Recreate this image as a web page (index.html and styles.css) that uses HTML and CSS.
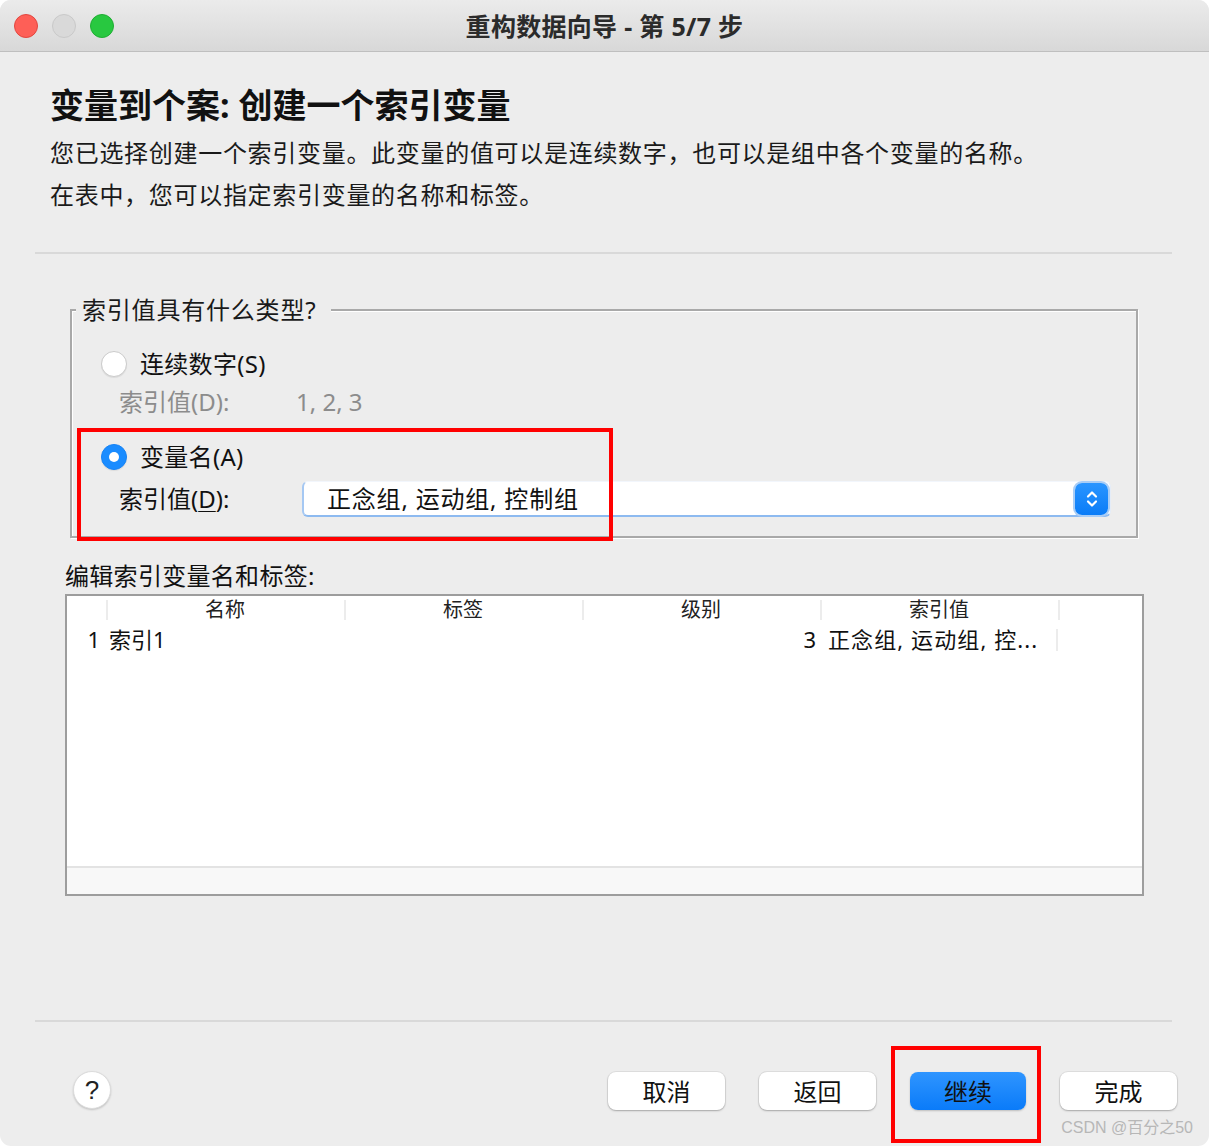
FILE: index.html
```html
<!DOCTYPE html>
<html lang="zh-CN">
<head>
<meta charset="utf-8">
<title>重构数据向导 - 第 5/7 步</title>
<link rel="stylesheet" href="styles.css">
</head>
<body>
<div class="window">
  <div class="titlebar">
    <div class="lights">
      <span class="light red"></span>
      <span class="light gray"></span>
      <span class="light green"></span>
    </div>
    <div class="title">重构数据向导 - 第 5/7 步</div>
  </div>

  <div class="content">
    <h1 class="heading">变量到个案: 创建一个索引变量</h1>
    <p class="desc">您已选择创建一个索引变量。此变量的值可以是连续数字，也可以是组中各个变量的名称。<br>在表中，您可以指定索引变量的名称和标签。</p>

    <div class="sep sep-top"></div>

    <div class="group">
      <span class="legend">索引值具有什么类型?</span>
      <div class="radio-row">
        <span class="radio"></span>
        <span class="radio-label">连续数字(S)</span>
      </div>
      <div class="value-row dim">
        <span class="value-label w1">索引值(D):</span>
        <span>1, 2, 3</span>
      </div>
      <div class="radio-row row-var">
        <span class="radio checked"></span>
        <span class="radio-label">变量名(A)</span>
      </div>
      <div class="value-row">
        <span class="value-label w2">索引值(<u>D</u>):</span>
        <div class="combo">
          <span class="combo-text">正念组, 运动组, 控制组</span>
          <span class="stepper">
            <svg width="14" height="20" viewBox="0 0 14 20"><path d="M3 7.5 L7 3.5 L11 7.5" fill="none" stroke="#fff" stroke-width="2.2" stroke-linecap="round" stroke-linejoin="round"/><path d="M3 12.5 L7 16.5 L11 12.5" fill="none" stroke="#fff" stroke-width="2.2" stroke-linecap="round" stroke-linejoin="round"/></svg>
          </span>
        </div>
      </div>
      <div class="highlight hl-group"></div>
    </div>

    <div class="table-label">编辑索引变量名和标签:</div>
    <div class="table">
      <div class="thead">
        <div class="cell c0"></div>
        <div class="cell col">名称</div>
        <div class="cell col">标签</div>
        <div class="cell col">级别</div>
        <div class="cell col">索引值</div>
        <div class="cell rest"></div>
      </div>
      <div class="trow">
        <div class="cell c0 num">1</div>
        <div class="cell col left">索引1</div>
        <div class="cell col"></div>
        <div class="cell col right">3</div>
        <div class="cell col left sepd">正念组, 运动组, 控...</div>
        <div class="cell rest"></div>
      </div>
      <div class="tfill"></div>
      <div class="hscroll"></div>
    </div>

    <div class="sep sep-bottom"></div>

    <div class="footer">
      <button class="help">?</button>
      <div class="buttons">
        <button class="btn">取消</button>
        <button class="btn">返回</button>
        <button class="btn primary">继续</button>
        <button class="btn">完成</button>
      </div>
      <div class="highlight hl-btn"></div>
      <div class="watermark">CSDN @百分之50</div>
    </div>
  </div>
</div>
</body>
</html>
```

FILE: styles.css
```css
* { box-sizing: border-box; }
html, body { margin: 0; padding: 0; background: #ffffff; }
body {
  width: 1209px;
  height: 1146px;
  overflow: hidden;
  font-family: "Noto Sans", "Noto Sans CJK SC", sans-serif;
  color: #111;
}
.window {
  width: 1209px;
  height: 1146px;
  background: #ededed;
  border-radius: 11px;
  overflow: hidden;
  display: flex;
  flex-direction: column;
}
.titlebar {
  height: 52px;
  flex: none;
  background: linear-gradient(#ebebeb, #d8d8d8);
  border-bottom: 1px solid #bfbfbf;
  position: relative;
  display: flex;
  align-items: center;
  justify-content: center;
}
.lights {
  position: absolute;
  left: 14px;
  top: 14px;
  display: flex;
  gap: 14px;
}
.light {
  width: 24px;
  height: 24px;
  border-radius: 50%;
  display: block;
}
.light.red { background: #fe5f57; border: 1px solid #e2463f; }
.light.gray { background: #d9d9d9; border: 1px solid #c9c9c9; }
.light.green { background: #28c840; border: 1px solid #1fae33; }
.title {
  font-size: 25px;
  font-weight: 700;
  color: #2b2b2b;
  line-height: 30px;
  letter-spacing: 0.3px;
}
.content {
  flex: 1;
  display: flex;
  flex-direction: column;
}
.heading {
  margin: 33px 0 0 50px;
  font-size: 34px;
  line-height: 40px;
  font-weight: 700;
  color: #111;
}
.desc {
  margin: 7px 0 0 50px;
  font-size: 24px;
  line-height: 42px;
  letter-spacing: 0.7px;
  color: #1a1a1a;
}
.sep {
  height: 2px;
  background: #d9d9d9;
  margin-left: 35px;
  margin-right: 37px;
}
.sep-top { margin-top: 36px; }
.group {
  position: relative;
  margin: 55px 71px 0 70px;
  height: 229px;
  border: 2px solid #a9a9a9;
  box-shadow: inset 1px 1px 0 #ffffff, 1px 1px 0 #ffffff;
  padding: 38px 25px 0 29px;
  display: flex;
  flex-direction: column;
}
.legend {
  position: absolute;
  left: 4px;
  top: -16px;
  padding: 0 15px 0 6px;
  background: #ededed;
  font-size: 24px;
  line-height: 30px;
  letter-spacing: 0.8px;
  color: #1a1a1a;
}
.radio-row {
  height: 30px;
  display: flex;
  align-items: center;
}
.row-var { margin-top: 25px; }
.radio {
  width: 26px;
  height: 26px;
  border-radius: 50%;
  background: #fff;
  border: 1px solid #cbcbcb;
  box-shadow: 0 1px 1px rgba(0,0,0,0.08);
  margin-right: 13px;
  flex: none;
  position: relative;
}
.radio.checked {
  background: #1a8cff;
  border-color: #1683f5;
}
.radio.checked::after {
  content: "";
  position: absolute;
  left: 7px;
  top: 7px;
  width: 10px;
  height: 10px;
  border-radius: 50%;
  background: #fff;
}
.radio-label {
  font-size: 24px;
  line-height: 30px;
  letter-spacing: 0.3px;
  color: #111;
}
.value-row {
  margin-top: 8px;
  padding-left: 18px;
  display: flex;
  align-items: center;
  font-size: 24px;
  line-height: 30px;
  color: #111;
}
.value-row.dim { color: #8c8c8c; }
.value-label { flex: none; }
.value-label.w1 { width: 177px; }
.value-label.w2 { width: 183px; }
.value-label u { text-decoration-thickness: 1px; text-underline-offset: 3px; }
.combo {
  flex: 1;
  height: 36px;
  background: #fff;
  border-radius: 6px;
  border-left: 2px solid #a5c8f3;
  border-bottom: 2px solid #8dbaf0;
  border-top: 1px solid #f2f6fc;
  border-right: 1px solid #e4ecf7;
  display: flex;
  align-items: center;
  padding-left: 23px;
  padding-right: 2px;
  margin-top: 1px;
}
.combo-text {
  flex: 1;
  font-size: 24px;
  line-height: 30px;
  letter-spacing: 0.8px;
  color: #111;
}
.stepper {
  width: 33px;
  height: 32px;
  border-radius: 7px;
  background: linear-gradient(#2a95ff, #0a7cf7);
  box-shadow: 0 0 0 2px #a9cdf6;
  display: flex;
  align-items: center;
  justify-content: center;
}
.highlight {
  position: absolute;
  border: 4px solid #ff0000;
  pointer-events: none;
}
.hl-group {
  left: 5px;
  top: 117px;
  width: 536px;
  height: 113px;
}
.table-label {
  margin: 23px 0 0 65px;
  font-size: 24px;
  line-height: 30px;
  letter-spacing: 0.3px;
  color: #111;
}
.table {
  margin: 3px 65px 0 65px;
  height: 302px;
  background: #fff;
  border: 2px solid #9d9d9d;
  display: flex;
  flex-direction: column;
}
.thead, .trow {
  display: flex;
  height: 28px;
  flex: none;
}
.cell {
  position: relative;
  font-size: 20px;
  line-height: 28px;
  color: #222;
  white-space: nowrap;
}
.cell.c0 { width: 39px; }
.cell.col {
  width: 238px;
  text-align: center;
}
.cell.rest { flex: 1; }
.thead .cell::before {
  content: "";
  position: absolute;
  left: 0;
  top: 4px;
  height: 20px;
  width: 2px;
  background: #ececec;
}
.thead .cell.c0::before { display: none; }
.trow { height: 32px; }
.trow .cell { font-size: 22px; line-height: 30px; color: #111; }
.trow .cell.num { text-align: right; padding-right: 6px; }
.trow .cell.left { text-align: left; padding-left: 3px; }
.trow .cell.right { text-align: right; padding-right: 4px; }
.trow .cell.sepd { padding-left: 8px; letter-spacing: 1.1px; }
.trow .cell.rest::before {
  content: "";
  position: absolute;
  left: -2px;
  top: 5px;
  height: 22px;
  width: 2px;
  background: #ececec;
}
.tfill { flex: 1; }
.hscroll {
  height: 28px;
  background: #f8f8f8;
  border-top: 2px solid #e3e3e3;
}
.sep-bottom { margin-top: 124px; }
.footer {
  position: relative;
  flex: 1;
  display: flex;
  align-items: flex-start;
  padding: 50px 32px 0 73px;
}
.help {
  width: 38px;
  height: 38px;
  border-radius: 50%;
  background: #fff;
  border: 1px solid #dcdcdc;
  box-shadow: 0 1px 2px rgba(0,0,0,0.18);
  font-family: "Liberation Sans", "Noto Sans", sans-serif;
  font-size: 26px;
  line-height: 36px;
  color: #222;
  padding: 0;
  margin-top: -1px;
}
.buttons {
  margin-left: auto;
  display: flex;
  gap: 34px;
}
.btn {
  width: 117px;
  height: 38px;
  border-radius: 8px;
  background: #fff;
  border: none;
  box-shadow: 0 0 0 1px rgba(0,0,0,0.06), 0 1px 2px rgba(0,0,0,0.25);
  font-family: "Noto Sans CJK SC", sans-serif;
  font-size: 24px;
  line-height: 38px;
  color: #111;
  padding: 0;
}
.btn.primary {
  width: 116px;
  background: linear-gradient(#2f95ff, #0a7bf9);
  box-shadow: 0 1px 2px rgba(0,0,0,0.2);
  color: #101010;
}
.hl-btn {
  left: 891px;
  top: 24px;
  width: 150px;
  height: 97px;
}
.watermark {
  position: absolute;
  right: 16px;
  bottom: 7px;
  font-family: "Liberation Sans", "Noto Sans CJK SC", sans-serif;
  font-size: 16px;
  line-height: 22px;
  color: #b7b7b7;
}
```
